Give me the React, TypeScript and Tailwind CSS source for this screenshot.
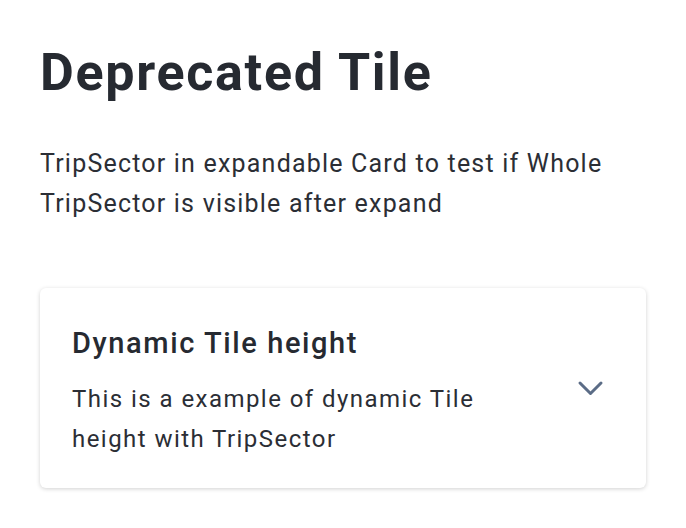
export default function App() {
  return (
    <div className="min-h-screen bg-white px-10 pt-[47px] font-['Roboto',sans-serif] text-[#262a31]">
      <h1 className="text-[52px] font-bold leading-none tracking-[1.7px]">Deprecated Tile</h1>
      <p className="mt-[45px] text-[25px] leading-10 tracking-[1.2px] text-[#2b2e35]">
        TripSector in expandable Card to test if Whole TripSector is visible after expand
      </p>
      <div className="mt-16 flex h-[200px] w-[606px] rounded-md bg-white pl-8 pr-[42px] shadow-[0_1px_4px_rgba(0,0,0,0.18)]">
        <div className="flex-1 pt-[37px]">
          <h2 className="text-[29px] font-medium leading-9 tracking-[1.6px]">Dynamic Tile height</h2>
          <p className="mt-[18px] w-[450px] text-2xl leading-10 tracking-[1.45px] text-[#2b2e35]">
            This is a example of dynamic Tile height with TripSector
          </p>
        </div>
        <svg width="27" height="17" viewBox="0 0 27 17" fill="none" className="shrink-0 self-center">
          <path d="M3 3l10.5 10.5L24 3" stroke="#5b6c86" strokeWidth="3" strokeLinecap="round" strokeLinejoin="round" />
        </svg>
      </div>
    </div>
  );
}
